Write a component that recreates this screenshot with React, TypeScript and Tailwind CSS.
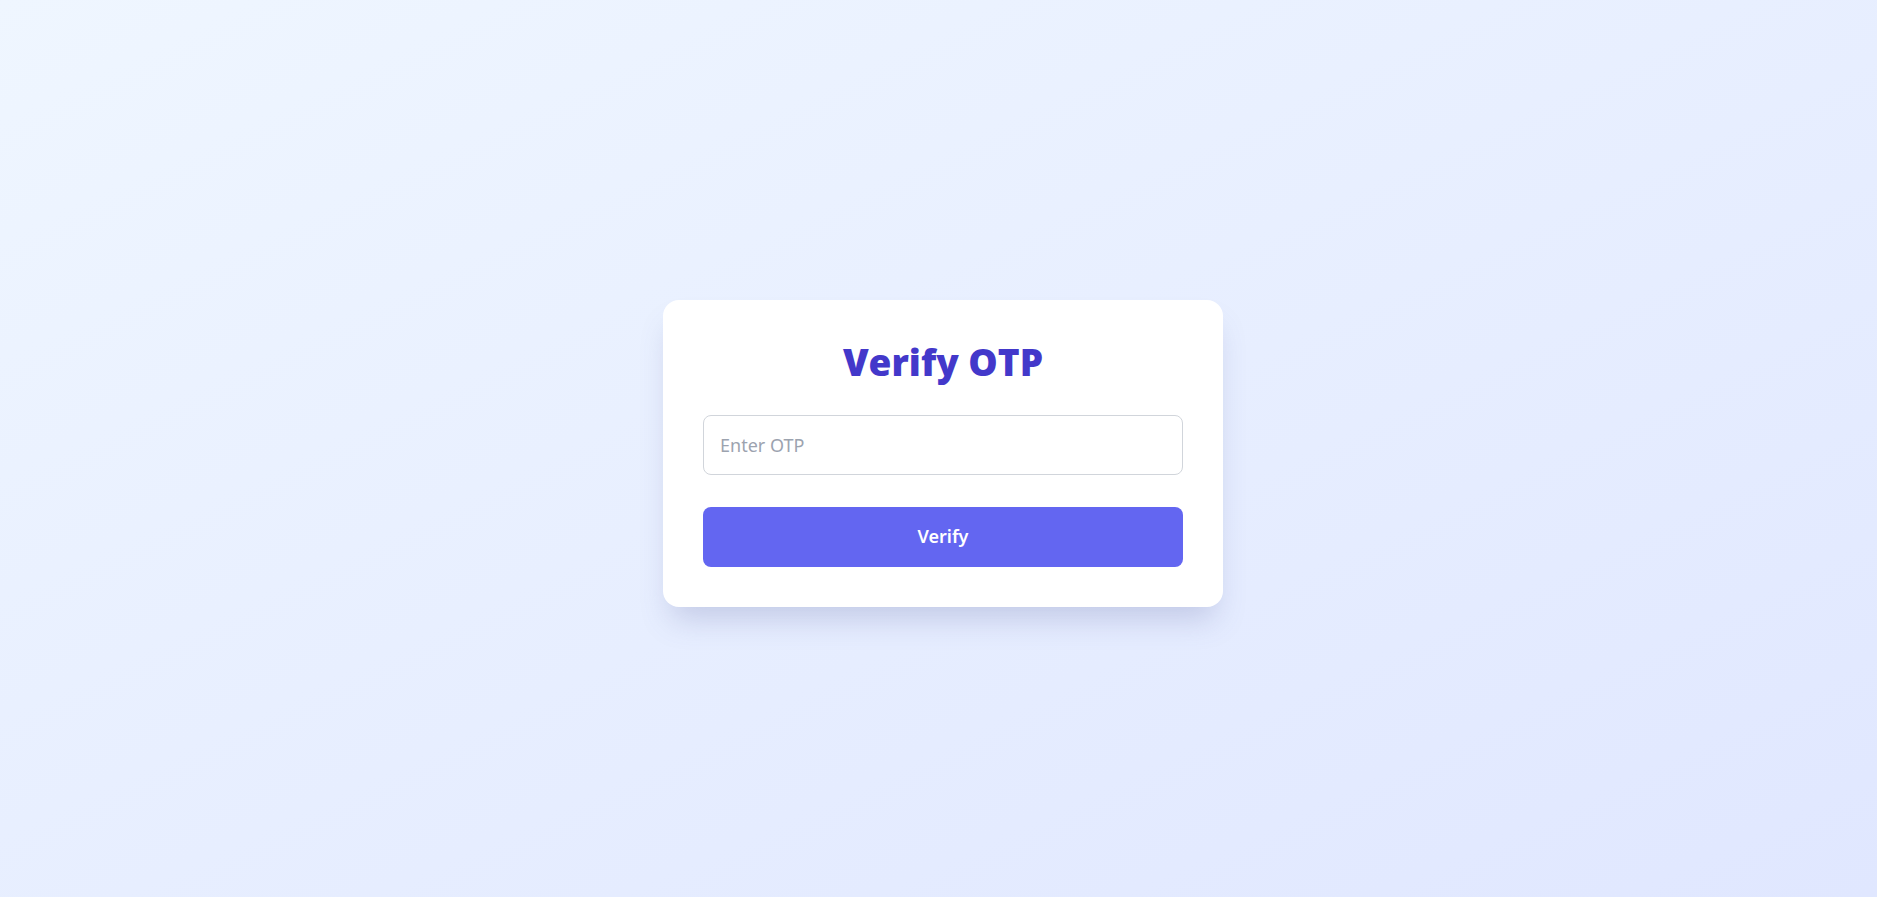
import React, { useState } from 'react';

const App: React.FC = () => {
  const [otp, setOtp] = useState('');

  const handleSubmit = (e: React.FormEvent) => {
    e.preventDefault();
  };

  return (
    <div className="flex min-h-screen w-full items-center justify-center bg-gradient-to-br from-[#eff6ff] to-[#e0e7ff] pt-[9px] pl-[9px] font-['Noto_Sans',sans-serif]">
      {/* Card */}
      <form
        onSubmit={handleSubmit}
        className="w-[560px] rounded-2xl bg-white p-10 shadow-[0_20px_30px_-8px_rgba(90,100,160,0.25)]"
      >
        <h1 className="mb-[33px] pt-[2px] text-center font-['Open_Sans',sans-serif] text-[37px] leading-[40px] font-extrabold text-[#4338ca]">
          Verify OTP
        </h1>
        <input
          type="text"
          value={otp}
          onChange={(e) => setOtp(e.target.value)}
          placeholder="Enter OTP"
          className="block h-[60px] w-full rounded-lg border border-[#d1d5db] px-4 text-[18px] text-gray-800 placeholder:text-[#9ca3af] focus:outline-none"
        />
        <button
          type="submit"
          className="mt-8 block h-[60px] w-full rounded-lg bg-[#6366f1] text-[18px] font-semibold text-white"
        >
          Verify
        </button>
      </form>
    </div>
  );
};

export default App;
